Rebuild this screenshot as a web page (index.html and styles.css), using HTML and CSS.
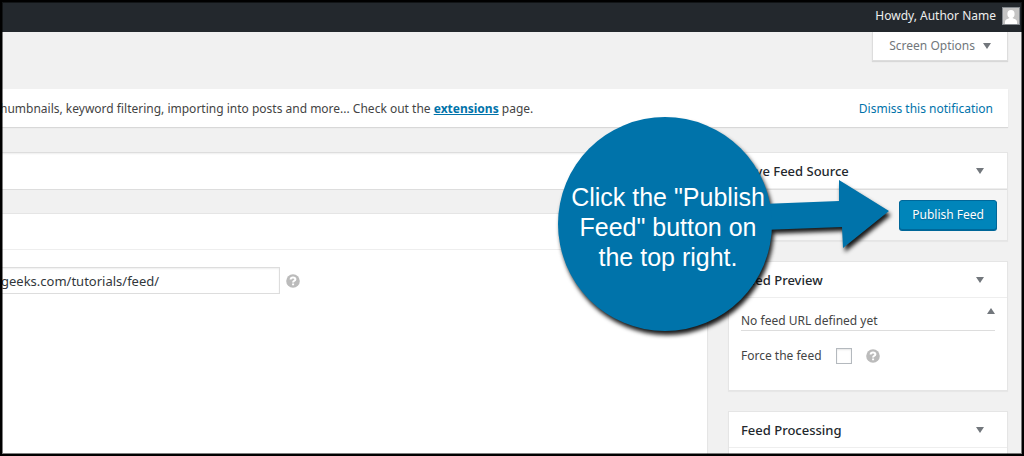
FILE: index.html
```html
<!DOCTYPE html>
<html lang="en">
<head>
    <meta charset="UTF-8">
    <meta name="viewport" content="width=device-width, initial-scale=1.0">
    <title>Edit Feed Source</title>
    <link rel="stylesheet" href="styles.css">
</head>
<body>
    <div class="screen">
        <header class="admin-bar">
            <span>Howdy, Author Name</span>
            <svg class="avatar" viewBox="0 0 18 18" aria-hidden="true">
                <rect width="18" height="18" fill="#c4c4c4"/>
                <ellipse cx="9" cy="7" rx="3.6" ry="4" fill="#fff"/>
                <path d="M3 17v-2q0-2.500 3-3.200l1.500-.8V10h3v1l1.500.8q3 .7 3 3.200v2z" fill="#fff"/>
                <rect x=".5" y=".5" width="17" height="17" fill="none" stroke="#82878c"/>
            </svg>
        </header>

        <main class="content">
            <div class="screen-meta">
                <button class="screen-options" type="button">Screen Options <span class="arrow-down"></span></button>
            </div>

            <div class="notice">
                <p>humbnails, keyword filtering, importing into posts and more... Check out the <a class="extensions" href="#">extensions</a> page.</p>
                <a class="dismiss" href="#">Dismiss this notification</a>
            </div>

            <div class="columns">
                <div class="main-column">
                    <input class="title-input" type="text" aria-label="Feed title">
                    <section class="box details">
                        <div class="box-header"></div>
                        <div class="url-row">
                            <input class="url-input" type="text" aria-label="Feed URL" value="geeks.com/tutorials/feed/">
                            <svg class="help" viewBox="0 0 14 14" aria-hidden="true">
                                <circle cx="7" cy="7" r="6.800" fill="#bbb"/>
                                <path d="M4.600 5.500Q4.700 3.500 7 3.500T9.400 5.300Q9.400 6.300 8.100 6.900Q7.100 7.300 7.100 8.500M7.100 9.400V11.200" fill="none" stroke="#fff" stroke-width="2"/>
                            </svg>
                        </div>
                    </section>
                </div>

                <aside class="sidebar">
                    <section class="box">
                        <div class="box-header">
                            <h2>Save Feed Source</h2>
                            <span class="arrow-down"></span>
                        </div>
                        <div class="publish">
                            <button class="publish-btn" type="button">Publish Feed</button>
                        </div>
                    </section>

                    <section class="box">
                        <div class="box-header">
                            <h2>Feed Preview</h2>
                            <span class="arrow-down"></span>
                        </div>
                        <div class="preview">
                            <div class="preview-status">
                                <p>No feed URL defined yet</p>
                                <span class="arrow-up"></span>
                            </div>
                            <div class="force">
                                <label for="force">Force the feed</label>
                                <input class="checkbox" type="checkbox" id="force">
                                <svg class="help" viewBox="0 0 14 14" aria-hidden="true">
                                    <circle cx="7" cy="7" r="6.800" fill="#bbb"/>
                                    <path d="M4.600 5.500Q4.700 3.500 7 3.500T9.400 5.300Q9.400 6.300 8.100 6.900Q7.100 7.300 7.100 8.500M7.100 9.400V11.200" fill="none" stroke="#fff" stroke-width="2"/>
                                </svg>
                            </div>
                        </div>
                    </section>

                    <section class="box">
                        <div class="box-header">
                            <h2>Feed Processing</h2>
                            <span class="arrow-down"></span>
                        </div>
                        <div class="processing"></div>
                    </section>
                </aside>
            </div>
        </main>

        <!-- Callout pointing at the publish button -->
        <div class="callout">
            <svg class="callout-shape" viewBox="0 0 340 220" aria-hidden="true">
                <path d="M205 88L282 85V64L332 95L286 132L285 111L205 114z" fill="#0073aa"/>
                <circle cx="108" cy="108" r="107" fill="#0073aa"/>
            </svg>
            <p class="callout-text">Click the "Publish<br>Feed" button on<br>the top right.</p>
        </div>
    </div>
</body>
</html>
```

FILE: styles.css
```css
* {
    margin: 0;
    padding: 0;
    box-sizing: border-box;
}

body {
    font-family: "Noto Sans", "Open Sans", sans-serif;
    font-size: 12px;
    line-height: 18px;
    color: #444;
    background: #f1f1f1;
}

input,
button {
    font: inherit;
}

a {
    color: #0073aa;
}

.screen {
    position: relative;
    height: 100vh;
    overflow: hidden;
}

/* Dark frame around the whole screen */
.screen::after {
    content: "";
    position: absolute;
    inset: 0;
    border: 2px solid #000;
    box-shadow: inset 0 0 0 1px rgba(0, 0, 0, 0.5);
    pointer-events: none;
}

.admin-bar {
    display: flex;
    align-items: center;
    justify-content: flex-end;
    gap: 6px;
    height: 32px;
    padding-right: 4px;
    background: #23282d;
    color: #eee;
}

.avatar {
    width: 18px;
    height: 18px;
}

.content {
    padding-right: 16px;
}

.screen-meta {
    display: flex;
    justify-content: flex-end;
    margin-bottom: 28px;
}

.screen-options {
    display: flex;
    align-items: center;
    gap: 8px;
    height: 29px;
    padding: 0 16px;
    border: 1px solid #ddd;
    border-top: none;
    background: #fff;
    box-shadow: 0 1px 1px rgba(0, 0, 0, 0.1);
    color: #72777c;
}

.arrow-down,
.arrow-up {
    border: 4px solid transparent;
}

.arrow-down {
    border-top: 6px solid #72777c;
    border-bottom: none;
}

.arrow-up {
    align-self: flex-start;
    border-bottom: 6px solid #72777c;
    border-top: none;
}

.notice {
    display: flex;
    justify-content: space-between;
    align-items: center;
    height: 38px;
    margin-bottom: 25px;
    padding: 2px 15px 0 0;
    background: #fff;
    box-shadow: 0 1px 1px rgba(0, 0, 0, 0.1);
}

.extensions {
    font-weight: bold;
}

.dismiss {
    text-decoration: none;
}

.columns {
    display: flex;
    gap: 20px;
}

.main-column {
    flex: 1;
}

.title-input {
    display: block;
    width: 100%;
    height: 38px;
    margin-bottom: 23px;
    border: 1px solid #ddd;
    box-shadow: inset 0 1px 2px rgba(0, 0, 0, 0.07);
}

.box {
    border: 1px solid #e5e5e5;
    background: #fff;
    box-shadow: 0 1px 1px rgba(0, 0, 0, 0.04);
}

.box-header {
    display: flex;
    justify-content: space-between;
    align-items: center;
    height: 36px;
    padding: 0 23px 0 12px;
    border-bottom: 1px solid #eee;
}

.box-header h2 {
    font-size: 13px;
    font-weight: 500;
    color: #23282d;
}

.details {
    min-height: 300px;
}

.url-row {
    display: flex;
    align-items: center;
    gap: 6px;
    padding-top: 17px;
}

.url-input {
    width: 279px;
    height: 27px;
    border: 1px solid #ddd;
    border-left: none;
    box-shadow: inset 0 1px 2px rgba(0, 0, 0, 0.07);
    font-size: 13px;
    color: #32373c;
}

.help {
    width: 14px;
    height: 14px;
}

.sidebar {
    display: flex;
    flex-direction: column;
    gap: 20px;
    width: 280px;
}

.publish {
    display: flex;
    justify-content: flex-end;
    padding: 10px;
    border-top: 1px solid #ddd;
    background: #f5f5f5;
}

.publish-btn {
    height: 30px;
    padding: 0 12px;
    border: 1px solid #006799;
    border-radius: 3px;
    background: #0085ba;
    box-shadow: 0 1px 0 #006799;
    color: #fff;
    text-shadow: 0 1px 1px #006799;
}

.preview {
    padding: 10px 12px 25px;
}

.preview-status {
    display: flex;
    justify-content: space-between;
    border-bottom: 1px solid #ddd;
}

.preview-status p {
    padding-top: 4px;
}

.force {
    display: flex;
    align-items: center;
    gap: 14px;
    padding-top: 16px;
}

.checkbox {
    appearance: none;
    width: 16px;
    height: 16px;
    border: 1px solid #b4b9be;
    background: #fff;
    box-shadow: inset 0 1px 2px rgba(0, 0, 0, 0.1);
}

.processing {
    height: 80px;
}

.callout {
    position: absolute;
    top: 116px;
    right: 127px;
    width: 340px;
    height: 220px;
}

.callout-shape {
    width: 340px;
    height: 220px;
    filter: drop-shadow(2px 4px 2px rgba(0, 0, 0, 0.9));
    overflow: visible;
}

.callout-text {
    position: absolute;
    top: 66px;
    left: 11px;
    width: 200px;
    font-family: "Liberation Sans", Arial, sans-serif;
    font-size: 25px;
    line-height: 30px;
    text-align: center;
    color: #fff;
}
```
